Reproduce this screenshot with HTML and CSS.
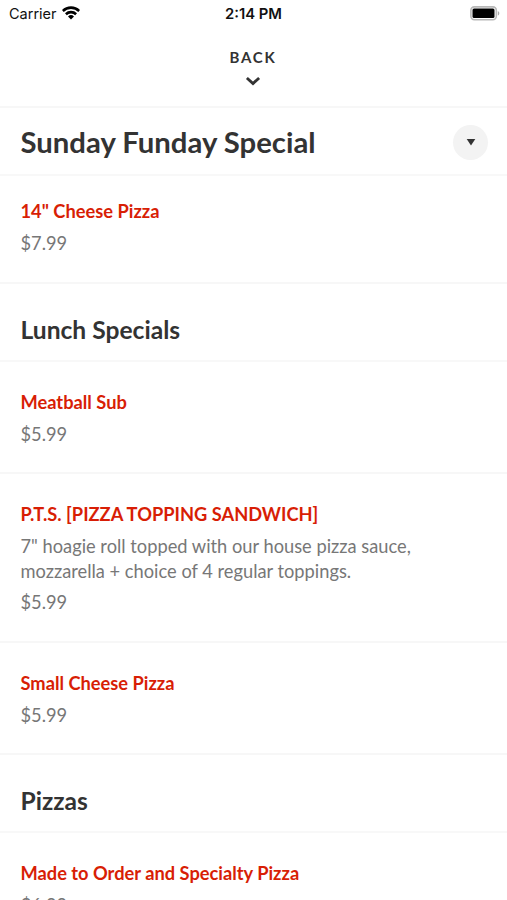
FILE: index.html
```html
<!DOCTYPE html>
<html lang="en"><head><meta charset="utf-8"><title>Menu</title><link rel="stylesheet" href="styles.css"></head>
<body>
<div class="status"><span class="carrier">Carrier <svg class="wifi" width="18" height="14" viewBox="0 0 18 14"><path d="M0 4a12.8 12.8 0 0 1 18 0l-1.7 2a10.3 10.3 0 0 0-14.6 0z"/><path d="M3 7.2a8.5 8.5 0 0 1 12 0l-1.8 2a6 6 0 0 0-8.4 0z"/><path d="M6 10.4a4.3 4.3 0 0 1 6 0l-3 3z"/></svg></span><time>2:14 PM</time><svg class="battery" width="31" height="15" viewBox="0 0 31 15"><rect x="1.9" y=".9" width="25.4" height="12.8" rx="3.4" fill="#fff" stroke="#b8b8b8" stroke-width="1.6"/><rect x="3.5" y="2.6" width="22" height="9.4" rx="1.5"/><path d="M28.8 5c2 .8 2 3.8 0 4.6z" fill="#aaa"/></svg></div>
<header class="back"><span>BACK</span><svg width="16" height="10" viewBox="0 0 16 10"><path d="M1.9 2L8 7.5 14.1 2" fill="none" stroke="#333" stroke-width="2.9"/></svg></header>
<div class="current"><h1>Sunday Funday Special</h1><button class="toggle" aria-label="Sections"><svg width="10" height="7" viewBox="0 0 10 7"><path d="M.7 0h8.6L5 6.5z" fill="#333"/></svg></button></div>
<section><article class="item first"><h3>14" Cheese Pizza</h3><p class="price">$7.99</p></article></section>
<section><h2>Lunch Specials</h2>
<article class="item"><h3>Meatball Sub</h3><p class="price">$5.99</p></article>
<article class="item"><h3>P.T.S. [PIZZA TOPPING SANDWICH]</h3><p class="desc">7" hoagie roll topped with our house pizza sauce,<br>mozzarella + choice of 4 regular toppings.</p><p class="price">$5.99</p></article>
<article class="item"><h3>Small Cheese Pizza</h3><p class="price">$5.99</p></article></section>
<section><h2>Pizzas</h2><article class="item"><h3>Made to Order and Specialty Pizza</h3><p class="price">$6.99</p></article></section>
</body></html>
```
FILE: styles.css
```css
*{box-sizing:border-box}
html,body{height:900px;overflow:hidden}
body{margin:0;background:#fff;color:#333;font-family:Lato,sans-serif}
h1,h2,h3,p{margin:0}
.status{height:28px;display:grid;grid-template-columns:1fr auto 1fr;align-items:center;padding:0 7px 0 9px;font:500 14.5px/28px Inter,sans-serif;color:#111}
.carrier{display:flex;align-items:center;gap:6px;font-weight:400}
.wifi{margin:-2px 0 0 -1px}
.status time{font-weight:600;font-size:14.8px;margin-right:2px}
.battery{justify-self:end;margin-top:-2px}
.back{height:80px;padding:19px 1px 0 0;display:flex;flex-direction:column;align-items:center;border-bottom:2px solid #f7f7f7;font-size:15px;font-weight:700;line-height:20px;letter-spacing:1.7px}
.back svg{margin-top:9px}
.current{height:68px;padding:2px 19px 0 20.5px;display:flex;align-items:center;justify-content:space-between;border-bottom:2px solid #f8f8f8}
h1{font-size:29.3px;line-height:36px;font-weight:700}
.toggle{width:35px;height:35px;border:0;border-radius:50%;background:#f3f3f3;padding:0;display:grid;place-items:center}
h2{height:78px;padding:30px 20.5px 0;font-size:24.6px;line-height:32px;border-bottom:2px solid #f8f8f8}
.item{padding:27px 20.5px 25.5px;border-bottom:2px solid #f7f7f7}
.item.first{padding-top:22px;padding-bottom:26.5px}
h3{font-size:18.27px;line-height:26px;color:#d81e05}
.price,.desc{margin-top:7px;font-size:18.27px;line-height:25px;color:#777}
.price{margin-top:6.5px}
.desc + .price{margin-top:6px;margin-bottom:.5px}
```
